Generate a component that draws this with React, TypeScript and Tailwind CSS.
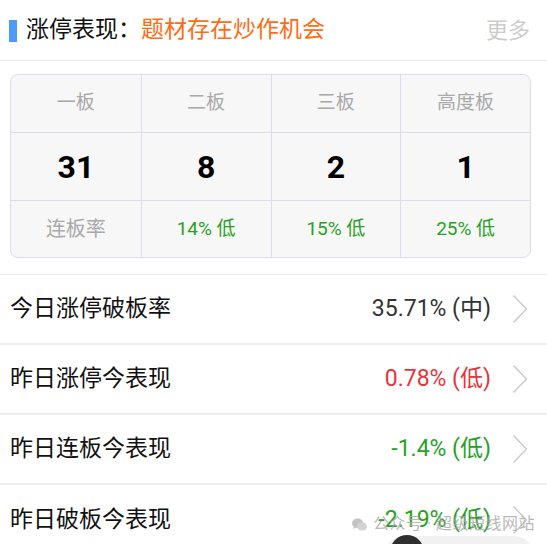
const FONT = "font-['Roboto','Noto_Sans_CJK_SC',sans-serif]";

const heads = ["一板", "二板", "三板", "高度板"];
const counts = ["31", "8", "2", "1"];
const rates = ["14% 低", "15% 低", "25% 低"];

const rows = [
  { label: "今日涨停破板率", value: "35.71% (中)", cls: "text-[#333333]" },
  { label: "昨日涨停今表现", value: "0.78% (低)", cls: "text-[#e8333b]" },
  { label: "昨日连板今表现", value: "-1.4% (低)", cls: "text-[#27a125]" },
  { label: "昨日破板今表现", value: "-2.19% (低)", cls: "text-[#27a125]" },
];

function WeChatIcon() {
  return (
    <svg width="15" height="13" viewBox="0 0 24 20" className="fill-[#b5b5b5]">
      <ellipse cx="9" cy="8" rx="9" ry="7.5" />
      <path d="M3 13 L2 17 L7 14.5 Z" />
      <ellipse cx="16" cy="13" rx="8" ry="6.5" className="fill-[#c9c9c9]" />
      <path d="M21 17 L22.5 20 L18 18.5 Z" className="fill-[#c9c9c9]" />
    </svg>
  );
}

function Chevron() {
  return (
    <svg width="16" height="30" viewBox="0 0 16 30" className="ml-[21px] shrink-0">
      <polyline points="1.5,1.5 14.5,15 1.5,28.5" fill="none" stroke="#c8c8c8" strokeWidth="1.3" />
    </svg>
  );
}

export default function App() {
  return (
    <div className={`relative w-[547px] h-[544px] overflow-hidden bg-white ${FONT}`}>
      <div className="h-[61px] flex items-center border-b border-[#e9e9e9] pl-[9px] pr-[17px]">
        <span className="w-[8px] h-[22px] bg-[#4a9cf6] mr-[9px] mt-[1px]" />
        <span className="text-[23px] text-[#111111]">涨停表现：</span>
        <span className="text-[23px] text-[#ff6c12]">题材存在炒作机会</span>
        <span className="ml-auto text-[22px] text-[#cccccc]">更多</span>
      </div>

      <div className="pt-[13px] pb-[16px] pl-[10px] pr-[16px] border-b border-[#eeeeee]">
        <div className="grid grid-cols-4 rounded-[8px] border border-[#dcdcea] bg-[#f7f7f7] overflow-hidden">
          {heads.map((h, i) => (
            <div
              key={h}
              className={`h-[58px] flex items-center justify-center text-[19px] text-[#a9a9a9] border-b border-[#dcdcea] ${i ? "border-l" : ""}`}
            >
              {h}
            </div>
          ))}
          {counts.map((c, i) => (
            <div
              key={i}
              className={`h-[68px] flex items-center justify-center text-[32px] font-bold text-black border-b border-[#dcdcea] ${i ? "border-l" : ""}`}
            >
              {c}
            </div>
          ))}
          <div className="h-[56px] flex items-center justify-center text-[20px] text-[#a9a9a9]">连板率</div>
          {rates.map((r) => (
            <div key={r} className="h-[56px] flex items-center justify-center text-[19px] text-[#27a125] border-l border-[#dcdcea]">
              {r}
            </div>
          ))}
        </div>
      </div>

      {rows.map((r, i) => (
        <div
          key={r.label}
          className={`h-[70px] flex items-center pl-[10px] pr-[19px] ${i < rows.length - 1 ? "border-b-2 border-[#eeeeee]" : ""}`}
        >
          <span className="text-[23px] text-[#111111]">{r.label}</span>
          <span className={`ml-auto text-[23px] ${r.cls}`}>{r.value}</span>
          <Chevron />
        </div>
      ))}

      <div className="absolute left-[352px] top-[512px] flex items-center gap-[6px] opacity-80">
        <WeChatIcon />
        <span className="text-[16px] text-[#a8a8a8] tracking-[0.5px]">公众号 · 超级短线网站</span>
      </div>

      <div className="absolute left-[384px] top-[536px] w-[150px] h-[40px] rounded-[20px] bg-[#f1f1f1]" />
      <div className="absolute left-[390px] top-[535px] w-[34px] h-[34px] rounded-full bg-[#2f2f2f]" />
    </div>
  );
}
